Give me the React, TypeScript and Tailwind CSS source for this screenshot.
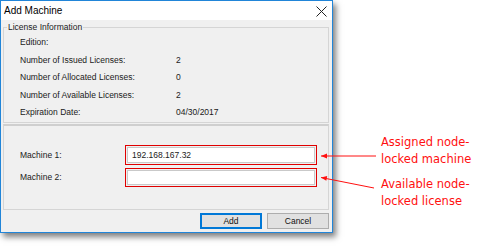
import React from "react";

const Row = ({ label, value }: { label: string; value?: string }) => (
  <div className="flex items-center h-[17.5px]">
    <div className="w-[156px]">{label}</div>
    <div>{value}</div>
  </div>
);

export default function App() {
  return (
    <div className="relative w-[493px] h-[248px] bg-white flex font-['Liberation_Sans',Arial,sans-serif] text-[8.5px] text-[#1a1a1a]">
      {/* Dialog */}
      <div className="w-[333px] h-[233px] border border-[#2185d8] bg-[#f0f0f0] flex flex-col shadow-[3px_4px_6px_rgba(0,0,0,0.5)]">
        {/* Title bar */}
        <div className="h-[19px] bg-white flex items-center justify-between pl-[3px] pr-[5px]">
          <span className="text-[10px] text-black">Add Machine</span>
          <svg width="11" height="11" viewBox="0 0 11 11" className="mt-[1px]">
            <path d="M0.5 0.5 L10.5 10.5 M10.5 0.5 L0.5 10.5" stroke="#222" strokeWidth="1" />
          </svg>
        </div>
        {/* Body */}
        <div className="flex flex-col px-[2px] pt-[7px]">
          {/* Group box 1 */}
          <div className="relative h-[96px] border border-[#d5d5d5] pl-[16px] pt-[6px] mr-[1px]">
            <span className="absolute -top-[6px] left-[3px] bg-[#f0f0f0] px-[1px] leading-[11px]">
              License Information
            </span>
            <Row label="Edition:" />
            <Row label="Number of Issued Licenses:" value="2" />
            <Row label="Number of Allocated Licenses:" value="0" />
            <Row label="Number of Available Licenses:" value="2" />
            <Row label="Expiration Date:" value="04/30/2017" />
          </div>
          {/* Group box 2 */}
          <div className="h-[86px] mt-[1px] mr-[1px] border border-[#d5d5d5] border-t-[2px] border-t-[#cfcfcf] flex flex-col pl-[16px] pt-[19px] gap-[3px]">
            <div className="flex items-center">
              <div className="w-[105px]">Machine 1:</div>
              <div className="border border-[#e00000] p-[1px] w-[192px]">
                <div className="h-[16px] bg-white border border-[#c9c9c9] flex items-center pl-[4px] text-[#222]">
                  192.168.167.32
                </div>
              </div>
            </div>
            <div className="flex items-center">
              <div className="w-[105px]">Machine 2:</div>
              <div className="border border-[#e00000] p-[1px] w-[192px]">
                <div className="h-[15px] bg-white border border-[#c9c9c9]" />
              </div>
            </div>
          </div>
          {/* Buttons */}
          <div className="flex justify-end gap-[5px] pt-[3px] pr-[1px]">
            <button className="w-[62px] h-[16px] bg-[#e1e1e1] border border-[#0078d7] outline outline-1 outline-[#0078d7] -outline-offset-2 text-[8.5px] text-[#111] flex items-center justify-center">
              Add
            </button>
            <button className="w-[62px] h-[16px] bg-[#e1e1e1] border border-[#adadad] text-[8.5px] text-[#111] flex items-center justify-center">
              Cancel
            </button>
          </div>
        </div>
      </div>

      {/* Annotations */}
      <div className="flex flex-col pl-[48px] pt-[134px] font-['DejaVu_Sans',sans-serif] text-[11.5px] leading-[17px] text-[#ff1010]">
        <div>Assigned node-</div>
        <div>locked machine</div>
        <div className="mt-[8px]">Available node-</div>
        <div>locked license</div>
      </div>

      {/* Arrows */}
      <svg className="absolute left-0 top-0 pointer-events-none" width="493" height="248">
        <line x1="376" y1="156" x2="321" y2="156" stroke="#ff1010" strokeWidth="1" />
        <path d="M321 156 L327 153.5 L327 158.5 Z" fill="#ff1010" />
        <line x1="374" y1="188" x2="321" y2="177.5" stroke="#ff1010" strokeWidth="1" />
        <path d="M321 177.5 L327.2 175.9 L326.3 180.8 Z" fill="#ff1010" />
      </svg>
    </div>
  );
}
